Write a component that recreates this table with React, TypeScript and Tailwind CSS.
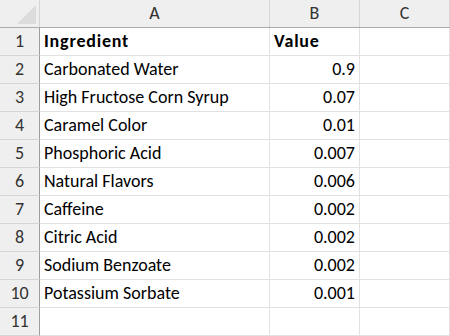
import React from "react";

const rows: [string, string][] = [
  ["Carbonated Water", "0.9"],
  ["High Fructose Corn Syrup", "0.07"],
  ["Caramel Color", "0.01"],
  ["Phosphoric Acid", "0.007"],
  ["Natural Flavors", "0.006"],
  ["Caffeine", "0.002"],
  ["Citric Acid", "0.002"],
  ["Sodium Benzoate", "0.002"],
  ["Potassium Sorbate", "0.001"],
];

const App: React.FC = () => {
  return (
    <div
      className="w-[450px] h-[336px] bg-white text-[18px] text-black overflow-hidden"
      style={{ fontFamily: "Carlito, 'Noto Sans', sans-serif" }}
    >
      <div className="flex h-[28px] bg-[#efefef] border-b border-[#ababab] text-[#333] text-[18px]">
        <div className="w-[40px] border-r border-[#d5d5d5] flex items-end justify-end pr-[3px] pb-[3px]">
          <svg width="19" height="19" viewBox="0 0 19 19">
            <polygon points="19,0 19,19 0,19" fill="#dcdcdc" />
          </svg>
        </div>
        <div className="w-[230px] border-r border-[#d5d5d5] flex items-center justify-center">A</div>
        <div className="w-[90px] border-r border-[#d5d5d5] flex items-center justify-center">B</div>
        <div className="w-[90px] border-r border-[#d5d5d5] flex items-center justify-center">C</div>
      </div>
      {[["Ingredient", "Value"], ...rows, ["", ""]].map(([name, value], i) => (
        <div key={i} className="flex h-[28px]">
          <div className="w-[40px] bg-[#efefef] border-r border-[#9e9e9e] border-b border-b-[#d5d5d5] flex items-center justify-center text-[#333] text-[18px]">
            {i + 1}
          </div>
          <div
            className={`w-[230px] border-r border-b border-[#e1e1e1] flex items-center pl-[4px] ${
              i === 0 ? "font-bold tracking-[0.8px]" : ""
            }`}
          >
            {name}
          </div>
          <div
            className={`w-[90px] border-r border-b border-[#e1e1e1] flex items-center ${
              i === 0 ? "font-bold tracking-[0.8px] justify-start pl-[4px]" : "justify-end pr-[4px]"
            }`}
          >
            {value}
          </div>
          <div className="w-[90px] border-r border-b border-[#e1e1e1]" />
        </div>
      ))}
    </div>
  );
};

export default App;
